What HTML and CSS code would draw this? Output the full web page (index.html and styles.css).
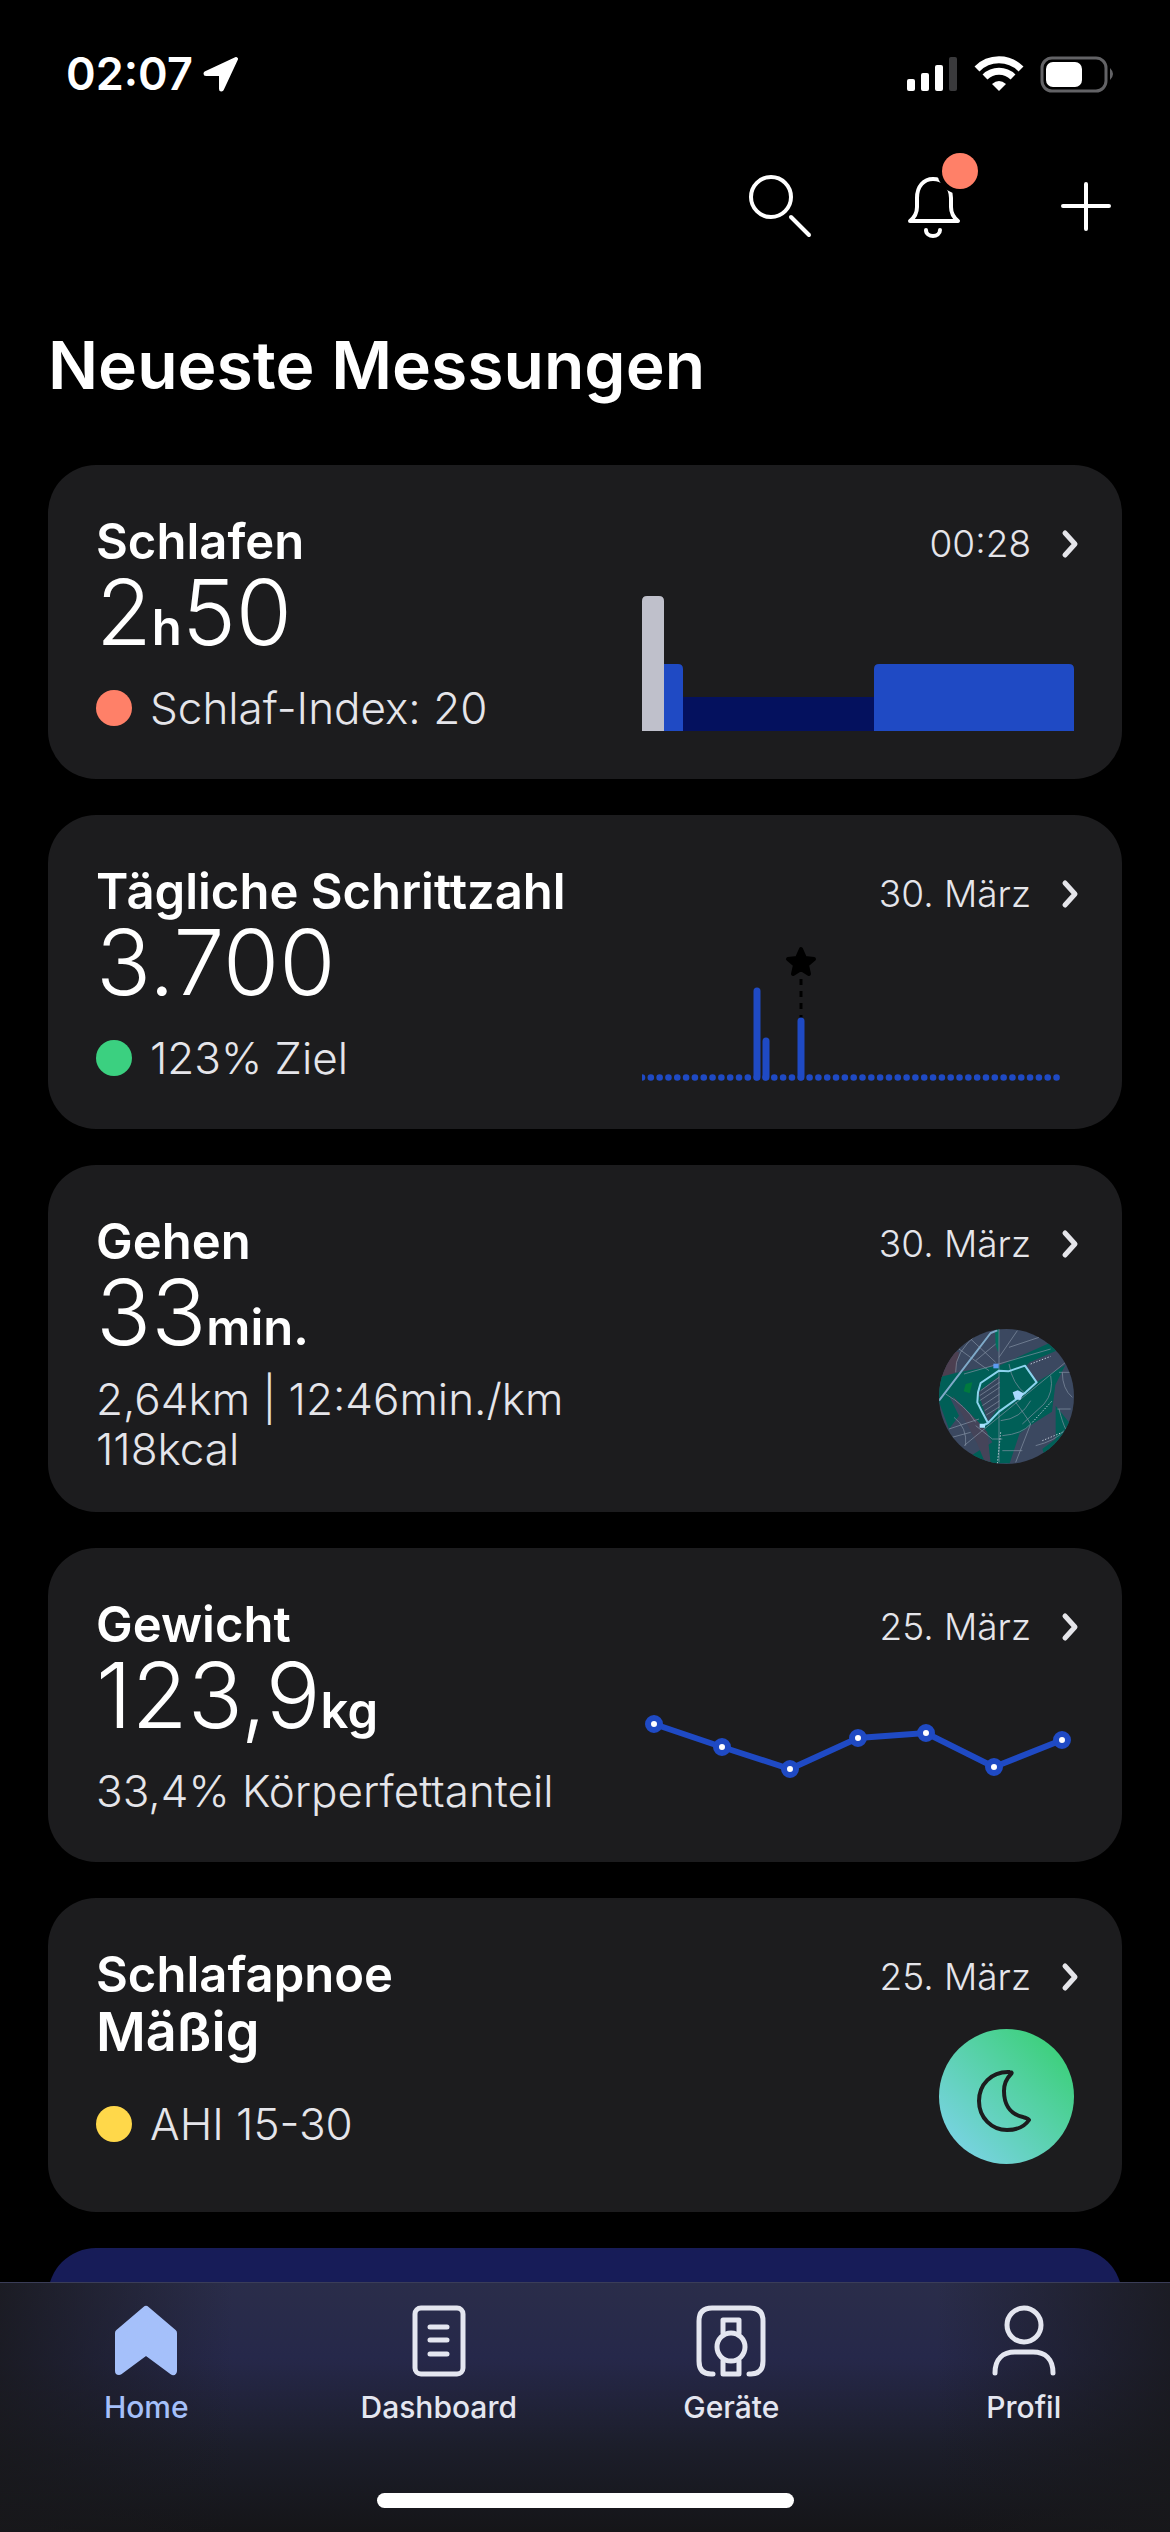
FILE: index.html
```html
<!DOCTYPE html>
<html lang="de">
<head>
<meta charset="utf-8">
<meta name="viewport" content="width=device-width">
<title>Neueste Messungen</title>
<link rel="stylesheet" href="styles.css">
</head>
<body>
<svg class="defs" aria-hidden="true">
<symbol id="chevron" viewBox="0 0 18 30"><path d="M4 4l10 11-10 11" fill="none" stroke="currentColor" stroke-width="5" stroke-linecap="round" stroke-linejoin="round"/></symbol>
</svg>

<div class="statusbar">
    <div class="time">
        <span>02:07</span>
        <svg width="36" height="35" viewBox="0 0 36 35"><path d="M33 2L3 16q-1 1 0 1h14q1 0 1 1v14q0 1 1 0z" fill="#fff" stroke="#fff" stroke-width="4" stroke-linejoin="round"/></svg>
    </div>
    <svg width="208" height="38" viewBox="0 0 208 38">
        <g fill="#fff">
            <rect x="1" y="24" width="8" height="12" rx="2"/>
            <rect x="15" y="18" width="8" height="18" rx="2"/>
            <rect x="29" y="10" width="8" height="26" rx="2"/>
            <rect x="43" y="2" width="8" height="34" rx="2" fill="#3a3a3c"/>
        </g>
        <g fill="none" stroke="#fff" stroke-width="7">
            <path d="M71 14a31 31 0 0 1 44 0"/>
            <path d="M79 22a20 20 0 0 1 28 0"/>
        </g>
        <path d="M86 29q7-6 14 0l-7 7z" fill="#fff"/>
        <rect x="136" y="3" width="64" height="33" rx="10" fill="none" stroke="#636366" stroke-width="3"/>
        <rect x="140" y="7" width="36" height="25" rx="7" fill="#fff"/>
        <path d="M204 13q6 6 0 12z" fill="#636366"/>
    </svg>
</div>

<header class="toolbar">
    <button type="button" aria-label="Suchen">
        <svg width="72" height="72" viewBox="0 0 72 72" fill="none" stroke="#fff" stroke-width="4" stroke-linecap="round"><circle cx="27" cy="27" r="20"/><path d="M47 47l18 18"/></svg>
    </button>
    <button type="button" aria-label="Mitteilungen">
        <svg width="72" height="72" viewBox="0 0 72 72" fill="none" stroke="#fff" stroke-width="4" stroke-linecap="round" stroke-linejoin="round"><path d="M13 51c5-4 7-8 7-14v-9c0-12 7-19 16-19s18 7 18 19v9c0 6 2 10 7 14z"/><path d="M29 60c0 8 14 8 14 0"/></svg>
        <span class="badge"></span>
    </button>
    <button type="button" aria-label="Hinzufügen">
        <svg width="72" height="72" viewBox="0 0 72 72" fill="none" stroke="#fff" stroke-width="4" stroke-linecap="round"><path d="M36 14v45M13 36h46"/></svg>
    </button>
</header>

<main>
<h1>Neueste Messungen</h1>

<a href="#schlafen" class="card">
    <div class="info">
        <h2>Schlafen</h2>
        <p class="value">2<small>h</small>50</p>
        <p class="sub"><span class="dot red"></span>Schlaf-Index: 20</p>
    </div>
    <div class="side">
        <p class="date">00:28 <svg width="18" height="30"><use href="#chevron"/></svg></p>
        <svg class="chart" viewBox="0 0 432 135">
            <path d="M41 101h191v34H41z" fill="#04115e"/>
            <path d="M22 68h14q5 0 5 5v62H22zM232 135V73q0-5 5-5h190q5 0 5 5v62z" fill="#1f4ac4"/>
            <path d="M0 135V5q0-5 5-5h12q5 0 5 5v130z" fill="#bfc0cb"/>
        </svg>
    </div>
</a>

<a href="#schritte" class="card">
    <div class="info">
        <h2>Tägliche Schrittzahl</h2>
        <p class="value">3.700</p>
        <p class="sub"><span class="dot green"></span>123% Ziel</p>
    </div>
    <div class="side">
        <p class="date">30. März <svg width="18" height="30"><use href="#chevron"/></svg></p>
        <svg class="chart" viewBox="0 0 432 135">
            <path d="M0 131.5H416" fill="none" stroke="#1f4ac4" stroke-width="6.6" stroke-linecap="round" stroke-dasharray="0 8.82"/>
            <path d="M159 33v40" stroke="#000" stroke-width="3" stroke-dasharray="6 6"/>
            <path d="M159 3l4 9 9 1-7 6 2 9-8-5-8 5 2-9-7-6 9-1z" stroke="#000" stroke-width="4" stroke-linejoin="round"/>
            <path d="M115 45v86M124 95v36M159 75v56" stroke="#1f4ac4" stroke-width="7" stroke-linecap="round"/>
        </svg>
    </div>
</a>

<a href="#gehen" class="card">
    <div class="info">
        <h2>Gehen</h2>
        <p class="value">33<small>min.</small></p>
        <p class="sub">2,64km | 12:46min./km<br>118kcal</p>
    </div>
    <div class="side">
        <p class="date">30. März <svg width="18" height="30"><use href="#chevron"/></svg></p>
        <svg class="round" viewBox="0 0 405 405">
            <rect width="405" height="405" fill="#3b4860"/>
            <path d="M0 150L20 60l40 10-10 60z" fill="#4c3f50"/>
            <path d="M0 145l60-15 50-10 70-10 150-67 22 22-80 35-10 10 32 48 85-50-30 60-10 80-55 35-42 30-20 60-10 30H60L160 340l-30-50-100-90 30 60-30 40L0 220z" fill="#005f57"/>
            <path d="M350 230l40 50v60l-70 50-10-30 40-30z" fill="#005f57"/>
            <path d="M168 0h12l-2 70-8-20z" fill="#00715f"/>
            <path d="M80 165l20-5-8 33-18-6z" fill="#007a3e"/>
            <path d="M117 190l65-50v90l-35 50z" fill="#37455c"/>
            <path d="M40 200l70 70 35 40 10 95H140l-25-60z" fill="#454459"/>
            <g fill="none" stroke="#8794a6" stroke-width="2">
                <path d="M50 130Q45 70 120 10M75 135L335 60M210 55l90-30M180 85l55-80M60 60l90 65M95 30l75 70M110 95l60-50M20 195q60 35 90 85M75 350L404 80M110 290l50 40h30M20 330l75-20M30 300l90-30M45 265q40 30 35 85M180 0v400M210 105q10 60 50 90M185 275q60-5 90-60M190 320q60-5 85-35M190 365h60M230 400l45-115M230 220q30 40 45 65M335 140q10 50-20 85l-65 60M360 130h40M370 130q0 50 30 75M355 240h40M360 240q10 40 20 60M290 350q60-15 85-45M125 185l55-40M122 200l60-40M122 215l60-40M130 230l52-35M137 245l45-30M142 258l40-25"/>
            </g>
            <path d="M275 105l60-23M280 280l60-65M185 310l-10 95M310 335l60-25" fill="none" stroke="#c5cedb" stroke-width="3" stroke-dasharray="4 5"/>
            <path d="M0 215L155 12l20-8" fill="none" stroke="#7fa9c8" stroke-width="6"/>
            <path d="M128 292l19-10-17-32-15-30 2-30 8-28 55-37 28 2 50-17 35 50-33 30-80 58-33 34" fill="none" stroke="#8cd3ee" stroke-width="6" stroke-linejoin="round"/>
            <rect x="163" y="104" width="16" height="14" fill="#5d9bf0"/>
            <path d="M221 190l15-6 18 9-10 20-16-2z" fill="#a9d9ff"/>
            <path d="M122 284h16v12h-16z" fill="#a9e4ff"/>
        </svg>
    </div>
</a>

<a href="#gewicht" class="card">
    <div class="info">
        <h2>Gewicht</h2>
        <p class="value">123,9<small>kg</small></p>
        <p class="sub">33,4% Körperfettanteil</p>
    </div>
    <div class="side">
        <p class="date">25. März <svg width="18" height="30"><use href="#chevron"/></svg></p>
        <svg class="chart" viewBox="0 0 432 135">
            <path d="M12 45l68 23 68 22 68-31 68-5 68 34 68-27" fill="none" stroke="#1f4ac4" stroke-width="6"/>
            <g fill="#fff" stroke="#1f4ac4" stroke-width="6">
                <circle cx="12" cy="45" r="6"/>
                <circle cx="80" cy="68" r="6"/>
                <circle cx="148" cy="90" r="6"/>
                <circle cx="216" cy="59" r="6"/>
                <circle cx="284" cy="54" r="6"/>
                <circle cx="352" cy="88" r="6"/>
                <circle cx="420" cy="61" r="6"/>
            </g>
        </svg>
    </div>
</a>

<a href="#schlafapnoe" class="card">
    <div class="info">
        <h2>Schlafapnoe</h2>
        <p class="value word">Mäßig</p>
        <p class="sub"><span class="dot yellow"></span>AHI 15-30</p>
    </div>
    <div class="side">
        <p class="date">25. März <svg width="18" height="30"><use href="#chevron"/></svg></p>
        <svg class="round moon" viewBox="0 0 135 135"><path d="M71 43C52 42 40 56 40 72c0 17 13 29 28 29 10 0 18-4 22-10-1-2-4-2-6-3-14-3-19-14-19-26 0-7 2-12 7-17 1-1 1-2-1-2z" fill="none" stroke="#1c1c1e" stroke-width="4" stroke-linejoin="round"/></svg>
    </div>
</a>

<a href="#mehr" class="card promo" aria-label="Mehr"></a>
</main>

<nav>
    <ul>
        <li><a href="#home" class="active">
            <svg width="72" height="72" viewBox="0 0 72 72"><path d="M36 5L9 28v38l27-20 27 20V28z" fill="currentColor" stroke="currentColor" stroke-width="8" stroke-linejoin="round"/></svg>
            Home</a></li>
        <li><a href="#dashboard">
            <svg width="72" height="72" viewBox="0 0 72 72" fill="none" stroke="currentColor" stroke-width="5" stroke-linecap="round"><rect x="12" y="3" width="48" height="66" rx="6"/><path d="M27 22h17M27 35h17M27 49h17"/></svg>
            Dashboard</a></li>
        <li><a href="#geraete">
            <svg width="72" height="72" viewBox="0 0 72 72" fill="none" stroke="currentColor" stroke-width="5" stroke-linecap="round" stroke-linejoin="round"><path d="M18 69h-2Q4 69 4 56V16Q4 3 17 3h38q13 0 13 13v40q0 13-12 13h-2"/><circle cx="36" cy="42" r="14"/><path d="M28 28V15h16v13M28 56v13h16V56"/></svg>
            Geräte</a></li>
        <li><a href="#profil">
            <svg width="72" height="72" viewBox="0 0 72 72" fill="none" stroke="currentColor" stroke-width="5" stroke-linecap="round"><circle cx="36" cy="20" r="17"/><path d="M7 68C7 54 15 47 27 47h18c12 0 20 7 20 21"/></svg>
            Profil</a></li>
    </ul>
    <div class="indicator"></div>
</nav>
</body>
</html>
```
FILE: styles.css
```css
* {
    box-sizing: border-box;
}
body {
    display: flex;
    flex-direction: column;
    height: 100vh;
    margin: 0;
    background: #000;
    color: #fff;
    font-family: Inter, "Liberation Sans", sans-serif;
}
h1, h2, p, ul {
    margin: 0;
    padding: 0;
}
a {
    color: inherit;
    text-decoration: none;
}
svg {
    display: block;
}
.defs {
    display: none;
}

/* status bar */
.statusbar {
    display: flex;
    justify-content: space-between;
    align-items: center;
    padding: 46px 56px 0 66px;
}
.time {
    display: flex;
    align-items: center;
    gap: 10px;
    font-size: 45px;
    line-height: 56px;
    font-weight: 600;
}

/* toolbar */
.toolbar {
    display: flex;
    justify-content: flex-end;
    gap: 81px;
    padding: 68px 48px 0;
}
.toolbar button {
    position: relative;
    padding: 0;
    border: 0;
    background: none;
}
.badge {
    position: absolute;
    top: -17px;
    right: -9px;
    width: 36px;
    height: 36px;
    border-radius: 50%;
    background: #ff8068;
    box-shadow: 0 0 0 5px #000;
}

main {
    flex: 1;
    min-height: 0;
    overflow-y: auto;
    scrollbar-width: none;
    padding: 83px 48px 0;
}
h1 {
    margin-bottom: 60px;
    font-size: 66px;
    line-height: 80px;
    font-weight: 600;
}

/* cards */
.card {
    display: flex;
    justify-content: space-between;
    min-height: 314px;
    margin-bottom: 36px;
    padding: 48px 48px 38px;
    border-radius: 48px;
    background: #1c1c1e;
}
.info {
    white-space: nowrap;
}
h2 {
    font-size: 49px;
    line-height: 58px;
    font-weight: 600;
}
.value {
    font-size: 91px;
    line-height: 82px;
    font-weight: 300;
}
.value small {
    font-size: 49px;
    line-height: 48px;
    font-weight: 600;
}
.value.word {
    padding-bottom: 10px;
    font-size: 54px;
    line-height: 55px;
    font-weight: 600;
}
.sub {
    display: flex;
    align-items: center;
    min-height: 67px;
    margin-top: 21px;
    color: #e5e5ea;
    font-size: 44px;
    line-height: 50px;
    font-weight: 300;
}
.dot {
    width: 36px;
    height: 36px;
    margin-right: 18px;
    border-radius: 50%;
}
.red { background: #ff8068; }
.green { background: #3bd080; }
.yellow { background: #ffd84a; }

.side {
    display: flex;
    flex-direction: column;
    justify-content: space-between;
    align-items: flex-end;
    width: 432px;
    padding-bottom: 10px;
}
.date {
    display: flex;
    align-items: center;
    gap: 30px;
    margin-right: -5px;
    color: #e5e5ea;
    font-size: 37px;
    line-height: 62px;
    font-weight: 300;
}
.chart {
    width: 100%;
}
.round {
    width: 135px;
    height: 135px;
    border-radius: 50%;
}
.moon {
    background: linear-gradient(45deg, #7ad3e4 10%, #3fd07f 85%);
}
.promo {
    background: #171c58;
}

/* tab bar */
nav {
    height: 250px;
    padding-top: 22px;
    border-top: 1px solid #3a3d58;
    background:
        linear-gradient(90deg, rgba(24, 24, 27, .8), rgba(24, 24, 27, 0) 20%, rgba(24, 24, 27, 0) 80%, rgba(24, 24, 27, .8)),
        linear-gradient(#2a2d4a, #26284a 30%, #1c1e2b 65%, #151518);
}
nav ul {
    display: flex;
    list-style: none;
}
nav li {
    flex: 1;
}
nav a {
    display: flex;
    flex-direction: column;
    align-items: center;
    gap: 12px;
    color: #e4e6f0;
    font-size: 30px;
    line-height: 36px;
    font-weight: 500;
}
nav a.active {
    color: #a5c0fa;
}
.indicator {
    width: 417px;
    height: 15px;
    margin: 68px auto 0;
    border-radius: 8px;
    background: #fff;
}
```
